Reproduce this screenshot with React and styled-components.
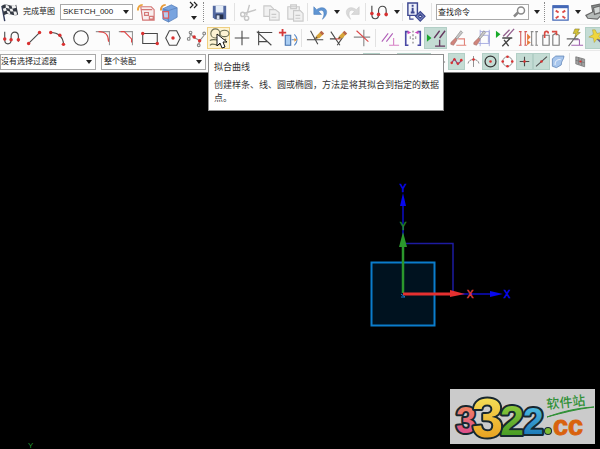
import React from 'react';
import styled, { createGlobalStyle, css } from 'styled-components';

const GlobalStyle = createGlobalStyle`
  * { box-sizing: border-box; }
  html, body, #root { height: 100%; }
  body {
    margin: 0;
    overflow: hidden;
    background: #000;
    color: #222;
    font: 8px/12px "Liberation Sans", "Noto Sans CJK SC", sans-serif;
  }
  button, select, input { font: inherit; color: inherit; }
`;

const Window = styled.div`
  height: 100%;
  min-height: 100vh;
  display: flex;
  flex-direction: column;
  overflow: hidden;
  position: relative;
`;

const Bar = styled.div`
  display: flex;
  align-items: center;
  flex: none;
  height: ${(p) => p.$height}px;
  background: #fcfcfc;
  border-bottom: 1px solid ${(p) => p.$edge || '#e9e9e9'};
  overflow: hidden;
  white-space: nowrap;
`;

const ToolButton = styled.button`
  flex: none;
  width: ${(p) => p.$width || 23}px;
  height: ${(p) => p.$height || 22}px;
  padding: 0;
  border: 1px solid transparent;
  background: transparent;
  display: flex;
  align-items: center;
  justify-content: center;
  ${(p) => p.$state === 'on' && css`
    background: #c4dcd4;
    border-color: #b2cfc6;
  `}
  ${(p) => p.$state === 'hover' && css`
    background: #fdf3d3;
    border-color: #efcf80;
  `}
`;

const FinishButton = styled.button`
  flex: none;
  display: flex;
  align-items: center;
  gap: 2px;
  width: 60px;
  height: 22px;
  padding: 0;
  border: 0;
  background: transparent;
`;

const Drawing = styled.svg`
  display: block;
  flex: none;
  overflow: visible;
  fill: none;
  stroke: #484848;
  stroke-width: 1.2;
`;

const Divider = styled.span`
  flex: none;
  width: 1px;
  height: 18px;
  margin: 0 ${(p) => p.$gap ?? 2}px;
  background: #e2e2e2;
`;

const Grip = styled.span`
  flex: none;
  width: 2px;
  height: 20px;
  margin: 0 ${(p) => p.$gap || 2}px;
  border-left: 1px dotted #8c8c8c;
`;

const Field = styled.label`
  flex: none;
  position: relative;
  width: ${(p) => p.$width}px;
  height: 16px;
  margin-right: ${(p) => p.$after || 0}px;
  display: flex;
`;

const Select = styled.select`
  appearance: none;
  width: 100%;
  height: 100%;
  margin: 0;
  padding: 0 12px 0 ${(p) => p.$inset ?? 2}px;
  border: 1px solid #a9a9a9;
  border-radius: 0;
  background: #fff;
`;

const SearchBox = styled.input`
  width: 100%;
  height: 100%;
  padding: 0 18px 0 1px;
  border: 1px solid #a9a9a9;
  border-radius: 0;
  background: #fff;
  &::placeholder { color: #222; opacity: 1; }
`;

const Adornment = styled.span`
  position: absolute;
  right: ${(p) => p.$right || 4}px;
  top: 50%;
  transform: translateY(-50%);
  pointer-events: none;
`;

const Overflow = styled.button`
  flex: none;
  width: 20px;
  height: 24px;
  padding: 2px 0 4px 6px;
  border: 0;
  background: transparent;
  display: flex;
  flex-direction: column;
  align-items: center;
  justify-content: space-between;
`;

const Tooltip = styled.div`
  position: absolute;
  z-index: 2;
  left: 208px;
  top: 54px;
  width: 236px;
  padding: 6px 2px 5px 5px;
  background: #fff;
  border: 1px solid #8d8d8d;
  color: #333;
  font-size: 9px;
  line-height: 13px;
`;

const TipTitle = styled.div`
  margin-bottom: 5px;
`;

const TipBody = styled.p`
  margin: 0;
`;

const Viewport = styled.main`
  flex: 1;
  position: relative;
  background: #000;
`;

const Triad = styled.svg`
  position: absolute;
  left: 360px;
  top: 105px;
  font: 10px "Liberation Sans", sans-serif;
`;

const CornerAxis = styled.span`
  position: absolute;
  left: 28px;
  bottom: -2px;
  color: #239a32;
  font-size: 8px;
  line-height: 10px;
`;

const Watermark = styled.svg`
  position: absolute;
  right: 5px;
  bottom: 5px;
  background: #cbcbcb;
  overflow: visible;
`;

const Pointer = styled.svg`
  position: absolute;
  z-index: 3;
  left: 216px;
  top: 33px;
  pointer-events: none;
`;

const Dots = ({ at, r = 1.9, fill = '#d93030' }) =>
  at.map(([x, y]) => <circle key={`${x}-${y}`} cx={x} cy={y} r={r} fill={fill} stroke="none" />);

const Pencil = () => (
  <g stroke="none">
    <path d="M10 12 12 8 16 4l3 3-4 4z" fill="#d9a63a" />
    <path d="m15 5 2-2 3 3-2 2z" fill="#b8664a" />
    <path d="m10 12 1-3 2 2z" fill="#5b4630" />
  </g>
);

const Screwdriver = () => (
  <g>
    <path d="m13 3 2 2-6 7-2-1z" fill="#c8c8c8" stroke="#858585" strokeWidth=".7" />
    <path d="m7 11 2 2-4 6-3-1v-2z" fill="#d0847b" stroke="#9a6561" strokeWidth=".6" />
  </g>
);

const icons = {
  flag: (
    <g stroke="none">
      <path d="M2 4 5 20" stroke="#343d5c" strokeWidth="1.5" />
      <path d="M2 4c5-4 8 2 15-1l2 10c-6 3-9-3-15 1z" fill="#343943" />
      <path d="m6 3 3 1 1 3-4-1zm6 1 4-1 1 3-4 1zM3 7l3-1 1 3-3 1zm7 0 3 0 1 3-3 0zm-3 2 3 1 1 3-3-1zm7 1 3 0 1 3-3 1z" fill="#f1f1f1" />
    </g>
  ),
  studio: <path d="M3 4v9c0 6 7 6 7 0V9c0-6 8-6 8 0v6" />,
  line: <path d="M4 17 16 5" />,
  arc: <path d="M3 5c8 0 14 5 14 13" />,
  circle: <circle cx="11" cy="11" r="8" />,
  fillet: (
    <g>
      <path d="M2 4h15v15" stroke="#969696" />
      <path d="M5 4c8 0 11 4 11 11" stroke="#e04444" />
    </g>
  ),
  chamfer: (
    <g>
      <path d="M2 4h15v15" stroke="#969696" />
      <path d="M4 4h4l8 8v4" stroke="#e04444" />
    </g>
  ),
  rect: <path d="M3 6h16v11H3z" />,
  polygon: <path d="M7 3h8l4 8-4 8H7l-4-8z" />,
  spline: (
    <g>
      <path d="m5 6-1 5m1-5q3 5 7 6l3 2 5-6" stroke="#888" />
      <path d="m15 14-1 4" stroke="#888" />
      <circle cx="5" cy="5" r="1.5" stroke="#888" />
      <circle cx="3" cy="12" r="1.5" stroke="#888" />
      <circle cx="20" cy="6" r="1.5" stroke="#888" />
      <circle cx="14" cy="19" r="1.5" stroke="#888" />
    </g>
  ),
  fit: (
    <g stroke="#6c6f55">
      <circle cx="7" cy="6" r="5" />
      <ellipse cx="17" cy="6" rx="5" ry="3.5" />
      <path d="M1 14c4-4 14 3 18-2M1 19c4-4 7 2 11-1" />
    </g>
  ),
  point: <path d="M11 3v16M3 11h16" />,
  corner: <path d="M4 3v16M4 5h15M2 4l16 15M4 15h10" />,
  pattern: (
    <g>
      <path d="M8 8h6v11H8z" fill="#a9cdf2" stroke="#4572ae" />
      <path d="M18 7c4 4 4 8 0 12M20 13h-5" stroke="#5d8dc9" />
      <path d="M5 1v8M1 5h8" stroke="#d43939" strokeWidth="2" />
      <path d="m18 11 3 2-3 2z" fill="#eb9739" stroke="none" />
    </g>
  ),
  trim: (
    <g>
      <path d="m5 3 8 15M1 13h18" />
      <Pencil />
    </g>
  ),
  trimRed: (
    <g>
      <path d="m2 4 10 15M16 9 9 19M1 12h6" />
      <path d="M7 12h6" stroke="#dc3f3f" />
      <Pencil />
    </g>
  ),
  extend: (
    <g>
      <path d="M2 10h18M13 2v18" stroke="#888" />
      <path d="m5 3 13 12" stroke="#dd4747" />
    </g>
  ),
  constraint: (
    <g stroke="#b05fb8">
      <path d="m2 15 7-9m-2 9 7-9" />
      <path d="M15 11v8m-5 0h11" stroke="#d680c5" />
    </g>
  ),
  symmetric: (
    <g>
      <path d="M6 4H3v15h3M16 4h3v15h-3" stroke="#4948a4" strokeWidth="1.8" />
      <path d="M11 3v16" stroke="#777" strokeDasharray="2 2" />
      <path d="M8 9v3m6-3v3" stroke="#999" />
      <path d="m5 3 4 2-4 2zm12 0-4 2 4 2z" fill="#c948be" stroke="none" />
    </g>
  ),
  display: (
    <g stroke="#65395f">
      <path d="m9 11 6-8m0 8 6-8" strokeWidth="1.5" />
      <path d="M15 13v7m-5 0h11" strokeWidth="1.5" />
      <path d="m1 7 5 4-5 4z" fill="#19a52c" stroke="none" />
    </g>
  ),
  screwCorner: (
    <g>
      <path d="M10 12h7v7M8 19h11" stroke="#e1847a" />
      <Screwdriver />
    </g>
  ),
  screwBox: (
    <g>
      <path d="M9 4h10v13H7m2-9h9v8M9 2v18m10-18v18" stroke="#9aa0dd" strokeWidth=".9" />
      <Screwdriver />
    </g>
  ),
  convert: (
    <g stroke="#94618f">
      <path d="m9 9 7-7m-3 8 8-9" strokeWidth="1.5" />
      <path d="M8 11h11M8 20l9-9m-7 2 5 7" stroke="#444" strokeWidth="1.5" />
      <path d="m1 3 5 4-5 4z" fill="#17aa29" stroke="none" />
    </g>
  ),
  mirror: (
    <g>
      <path d="M3 4v15m5-15v15M1 4h3m3 0h3M1 19h3m3 0h3" stroke="#d45c5b" />
      <path d="M15 4v15m5-15v15m-6-15h3m2 0h3m-8 15h3m2 0h3" stroke="#888" />
      <path d="m10 6 4 4-4 4zm0 7 4 3-4 3z" fill="#e77c3d" stroke="none" />
    </g>
  ),
  locks: (
    <g>
      <path d="M2 8h7v11H2zm11 0 3-2 4 2v11h-7z" stroke="#777" />
      <path d="M4 11V6c0-3 4-3 4 0M12 4h5v4" stroke="#d94a42" strokeWidth="1.8" />
    </g>
  ),
  flash: (
    <g>
      <path d="M11 13h6v6m-9 0h13" stroke="#a164b0" />
      <path d="m5 20 9-12M3 12h13" stroke="#666" />
      <path d="m12 1 5 0-2 4h3l-6 5 1-4h-3z" fill="#d5c337" stroke="#716923" strokeWidth=".5" />
    </g>
  ),
  magic: (
    <g>
      <path d="m10 10 12 12" stroke="#615b92" strokeWidth="2.5" />
      <path d="m9 2 2 4 5-1-3 4 3 4-5-1-3 4-1-5-5-1 5-3-1-5z" fill="#efd63c" stroke="#9d903c" strokeWidth=".5" />
    </g>
  ),
  sketchBox: (
    <g>
      <path d="M5 5h11l3 3v11H7zm0 3h12m-8 3h4v3H9zm5 4h4v3h-4z" stroke="#d47776" fill="#f8eeee" />
      <path d="M2 9c0-5 2-6 5-6" stroke="#eba33e" strokeWidth="2" />
    </g>
  ),
  cube: (
    <g stroke="#587fba" strokeWidth=".8">
      <path d="m4 7 9-4 6 3v10l-9 5-6-3z" fill="#79a4df" />
      <path d="m4 7 6 2v12m0-12 9-3" fill="#5f8dd0" />
      <path d="M4 10h6v7H5z" stroke="#d85c62" strokeWidth="1.3" fill="#b6ccef" />
      <path d="M2 9c0-5 2-6 5-6" fill="none" stroke="#e99a38" strokeWidth="2" />
    </g>
  ),
  save: (
    <g stroke="none">
      <path d="M4 4h14v14H6l-2-2z" fill="#5268a0" />
      <path d="M7 4h8v7H7z" fill="#e4ecf7" />
      <path d="M7 13h8v5H7z" fill="#252f4a" />
      <path d="M8 14h3v4H8z" fill="#d4dced" />
    </g>
  ),
  cut: (
    <g stroke="#c6c6c6" strokeWidth="1.5">
      <path d="m12 3-3 11m10-6L6 12" />
      <circle cx="5" cy="13" r="2.2" />
      <circle cx="9" cy="17" r="2.2" />
    </g>
  ),
  copy: (
    <g stroke="#cacaca" fill="#f1f1f1">
      <path d="M3 4h7l3 3v8H3z" />
      <path d="M9 8h6l4 3v8H9zm2 5h5m-5 3h5" />
    </g>
  ),
  paste: (
    <g stroke="#cacaca" fill="#f1f1f1">
      <path d="M4 5h12v13H4zM7 3h6v4H7z" />
      <path d="M10 9h7l3 3v8H10zm2 5h5m-5 3h5" />
    </g>
  ),
  undo: <path d="M4 5v8h8l-3-3c4-4 8 1 4 8 9-7 3-16-6-10z" fill="#5f95d3" stroke="#4a7bb9" strokeWidth=".6" />,
  redo: <path d="M18 5v8h-8l3-3c-4-4-8 1-4 8-9-7-3-16 6-10z" fill="#dadada" stroke="#c8c8c8" strokeWidth=".6" />,
  info: (
    <g stroke="#3d4790">
      <path d="M3 1h10v13H3z" fill="#edf0fb" strokeWidth="1.5" />
      <path d="M8 3v2m0 1v5m-2 0h4" strokeWidth="2" />
      <path d="m11 15 5-5 5 5-5 5z" fill="#7a88bb" />
      <path d="m14 15 2-2 2 2-2 2z" fill="#eef1fb" />
      <path d="M5 14v4h4" />
    </g>
  ),
  window: (
    <g>
      <path d="M3 4h16v15H3z" fill="#fff" stroke="#4468b6" strokeWidth="1.3" />
      <path d="M3 5h16" stroke="#4468b6" strokeWidth="3" />
      <path d="m6 9 3 2m7-2-3 2m-7 6 3-2m7 2-3-2" stroke="#df4c48" strokeWidth="2" />
    </g>
  ),
  laptop: (
    <g stroke="#696969">
      <path d="m8 4 10-2 1 10-9 3z" fill="#8c9291" />
      <path d="m2 14 8-4 10 2-6 6-10-1z" fill="#b5bab8" />
      <path d="m10 6 7-2v7l-6 2z" fill="#d4d8d7" />
    </g>
  ),
  snapPoly: <path d="m4 13 4-6 5 8 6-6" stroke="#874078" strokeWidth="1.7" />,
  snapCross: <path d="M11 3v16M3 14c1-8 15-8 16 0" stroke="#777" />,
  snapCenter: <circle cx="11" cy="11" r="8" stroke="#333" strokeWidth="1.8" />,
  snapQuad: <circle cx="11" cy="11" r="7" stroke="#777" />,
  snapPoint: <path d="M11 4v14M4 11h14" strokeWidth="1.6" />,
  snapLine: <path d="M3 18 19 4" strokeWidth="1.5" />,
  face: (
    <g stroke="#6488b9">
      <path d="m2 7 5-4h12c0 6-4 6-4 13l-7 4-6-2z" fill="#a7c5ec" />
      <path d="M6 16c0-6 3-8 8-8" stroke="#fff" />
    </g>
  ),
  sheet: (
    <g stroke="#707070">
      <path d="m3 3 15 4v13L3 15z" fill="#a1a1a1" />
      <path d="m8 4v12m5-10v12M3 9l15 4" />
    </g>
  ),
};

const marks = {
  studio: [[3, 12], [10, 13], [18, 13]],
  line: [[4, 17], [16, 5]],
  arc: [[3, 5], [13, 8], [17, 18]],
  rect: [[3, 6], [19, 17]],
  polygon: [[11, 11]],
  spline: [[9, 10], [15, 14]],
  snapPoly: [[4, 13], [8, 8], [13, 14], [18, 9]],
  snapCross: [[11, 8]],
  snapCenter: [[11, 11]],
  snapQuad: [[11, 4], [4, 11], [18, 11], [11, 18]],
  snapPoint: [[11, 11]],
  snapLine: [[11, 11]],
  sheet: [[11, 11]],
};

const Icon = ({ name, size = 21 }) => (
  <Drawing width={size} height={size} viewBox="0 0 22 22" aria-hidden="true">
    {icons[name]}
    {marks[name] && <Dots at={marks[name]} />}
  </Drawing>
);

const Tool = ({ name, label, state, width, height, size }) => (
  <ToolButton type="button" aria-label={label || name} $state={state} $width={width} $height={height}>
    <Icon name={name} size={size} />
  </ToolButton>
);

const Caret = () => (
  <Drawing width="6" height="4" viewBox="0 0 6 4" aria-hidden="true">
    <path d="M0 0h6L3 4z" fill="#222" stroke="none" />
  </Drawing>
);

const Menu = ({ label, width = 9 }) => (
  <ToolButton type="button" aria-label={label} $width={width}>
    <Caret />
  </ToolButton>
);

const Dropdown = ({ label, value, width, after, inset }) => (
  <Field $width={width} $after={after}>
    <Select aria-label={label} defaultValue={value} $inset={inset}>
      <option>{value}</option>
    </Select>
    <Adornment><Caret /></Adornment>
  </Field>
);

const curveTools = [
  ['studio', '艺术样条'], ['line', '直线'], ['arc', '圆弧'], ['circle', '圆'],
  ['fillet', '圆角'], ['chamfer', '倒斜角'], ['rect', '矩形'], ['polygon', '多边形'],
  ['spline', '样条'], ['fit', '拟合曲线', 'hover'], ['point', '点'], ['corner', '偏置曲线'], ['pattern', '阵列曲线'],
];
const editTools = [['trim', '快速修剪'], ['trimRed', '快速延伸'], ['extend', '制作拐角']];
const constraintTools = [
  ['constraint', '几何约束'], ['symmetric', '设为对称'], ['display', '显示约束', 'on'],
  ['screwCorner', '自动约束'], ['screwBox', '自动尺寸'], ['convert', '转换'],
  ['mirror', '备选解'], ['locks', '锁定'], ['flash', '推断约束'], ['magic', '连续自动标注', 'on'],
];
const snapTools = [
  ['snapPoly', '端点', 'on'], ['snapCross', '交点'], ['snapCenter', '圆心', 'on'],
  ['snapQuad', '象限点'], ['snapPoint', '现有点', 'on'], ['snapLine', '曲线上的点', 'on'], ['face', '面上的点'],
];
const coveredSnaps = [
  ['rect'], ['cube'], ['polygon'], ['circle'], ['sheet'], ['face'], ['spline'], ['snapCross'],
  ['snapLine'], ['snapPoint', null, 'on'], ['circle'], ['line', null, 'on'], ['arc', null, 'on'], ['point'],
];

const renderTools = (list, props) =>
  list.map(([name, label, state], i) => (
    <Tool key={`${name}-${i}`} name={name} label={label} state={state} {...props} />
  ));

const StandardBar = () => (
  <Bar $height={25}>
    <FinishButton type="button"><Icon name="flag" />完成草图</FinishButton>
    <Dropdown label="草图名" value="SKETCH_000" width={73} after={2} />
    <Tool name="sketchBox" label="定向到草图" />
    <Tool name="cube" label="重新附着" />
    <Overflow type="button" aria-label="更多">
      <Drawing width="8" height="6" viewBox="0 0 8 6">
        <path d="m0 0 3 3-3 3M4 0l3 3-3 3" stroke="#222" />
      </Drawing>
      <Caret />
    </Overflow>
    <Grip $gap={2} />
    <Tool name="save" label="保存" width={25} />
    <Divider />
    <Tool name="cut" label="剪切" />
    <Tool name="copy" label="复制" />
    <Tool name="paste" label="粘贴" />
    <Divider $gap={1} />
    <Tool name="undo" label="撤销" />
    <Menu label="撤销列表" />
    <Tool name="redo" label="重做" />
    <Divider $gap={1} />
    <Tool name="studio" label="重复命令" width={25} />
    <Menu label="命令列表" />
    <Divider $gap={1} />
    <Tool name="info" label="命令查找器" />
    <Divider $gap={4} />
    <Field $width={93} $after={3}>
      <SearchBox aria-label="查找命令" placeholder="查找命令" />
      <Adornment $right={3}>
        <Drawing width="13" height="13" viewBox="0 0 13 13">
          <circle cx="8" cy="5" r="3.5" stroke="#8a8a8a" strokeWidth="1.5" />
          <path d="m5 7-4 4" stroke="#888" strokeWidth="2.5" />
        </Drawing>
      </Adornment>
    </Field>
    <Menu label="查找选项" width={9} />
    <Grip $gap={3} />
    <Tool name="window" label="窗口" />
    <Menu label="窗口列表" width={12} />
    <Tool name="laptop" label="显示" width={20} />
  </Bar>
);

const SketchBar = () => (
  <Bar $height={26}>
    {renderTools(curveTools, { size: 20 })}
    <Divider />
    {renderTools(editTools, { size: 20 })}
    <Divider />
    {renderTools(constraintTools, { size: 20 })}
  </Bar>
);

const SelectionBar = () => (
  <Bar $height={22} $edge="#777">
    <Dropdown label="类型过滤器" value="没有选择过滤器" width={96} after={5} inset={0} />
    <Dropdown label="选择范围" value="整个装配" width={105} after={4} />
    {renderTools(coveredSnaps, { width: 17, height: 17, size: 14 })}
    {renderTools(snapTools, { width: 17, height: 17, size: 15 })}
    <Divider $gap={2} />
    <Tool name="sheet" label="片体" width={17} height={17} size={13} />
  </Bar>
);

const Axes = () => (
  <Triad width="160" height="160" viewBox="360 178 160 160" role="img" aria-label="坐标系">
    <rect x="371.5" y="262.5" width="63" height="63" fill="#00121f" stroke="#0b7dcc" strokeWidth="2" />
    <path d="M403 243.5h50v50" fill="none" stroke="#1d1ba0" strokeWidth="1.5" />
    <path d="M403 236v-35M455 294h39" stroke="#0c0cc4" strokeWidth="1.5" />
    <path d="m403 193 3 13h-6zM503 294l-13-3v6z" fill="#0808ee" />
    <path d="M403 293v-53" stroke="#2b972c" strokeWidth="2.5" />
    <path d="m403 232 4 15h-8z" fill="#2b972c" />
    <path d="M403 294h50" stroke="#e53030" strokeWidth="3" />
    <path d="m465 294-15-4v7z" fill="#e53030" />
    <path d="M401 297h4l-4-3" fill="none" stroke="#1878c8" />
    <g textAnchor="middle" strokeWidth=".5">
      <text x="403" y="192" fill="#0808ee" stroke="#0808ee">Y</text>
      <text x="403" y="230" fill="#238329" stroke="#238329">Y</text>
      <text x="470" y="298" fill="#d63c3c" stroke="#d63c3c">X</text>
      <text x="507" y="298" fill="#0808ee" stroke="#0808ee">X</text>
    </g>
  </Triad>
);

const digits = [
  { text: '3', x: 6, y: 44, size: 36, fill: 'url(#rose)' },
  { text: '2', x: 73, y: 45, size: 37, fill: 'url(#azure)' },
  { text: '2', x: 50, y: 46, size: 43, fill: 'url(#lime)' },
  { text: '3', x: 22, y: 48, size: 56, fill: 'url(#gold)' },
];

const Gradient = ({ id, from, to }) => (
  <linearGradient id={id} x1="0" y1="0" x2="0" y2="1">
    <stop offset=".2" stopColor={from} />
    <stop offset=".9" stopColor={to} />
  </linearGradient>
);

const SiteMark = () => (
  <Watermark width="145" height="55" viewBox="0 0 145 55" role="img" aria-label="3322.cc 软件站">
    <defs>
      <Gradient id="rose" from="#ef8062" to="#d94791" />
      <Gradient id="gold" from="#f4dc55" to="#e69b1b" />
      <Gradient id="lime" from="#8bc83c" to="#3f9622" />
      <Gradient id="azure" from="#4ab5dd" to="#1672b4" />
    </defs>
    <g fontFamily='"Liberation Sans", sans-serif' fontWeight="700" stroke="#17272f" strokeWidth="4" strokeLinejoin="round" paintOrder="stroke">
      {digits.map((d) => (
        <text key={d.x} x={d.x} y={d.y} fontSize={d.size} fill={d.fill}>{d.text}</text>
      ))}
      <circle cx="98" cy="42" r="3" fill="#7dbb34" strokeWidth="2" />
    </g>
    <text x="103" y="46" fill="#d9620d" stroke="#d9620d" fontFamily='"Liberation Sans", sans-serif' fontWeight="700" fontSize="27">cc</text>
    <text x="97" y="20" transform="rotate(-6 97 20)" fill="#2f9035" fontFamily='"Noto Sans CJK SC", sans-serif' fontWeight="500" fontSize="13">软件站</text>
    <path d="M97 28c14-5 29-9 47-10-17 2-32 6-47 10z" fill="#2f9035" stroke="#2f9035" />
  </Watermark>
);

export default function App() {
  return (
    <Window>
      <GlobalStyle />
      <StandardBar />
      <SketchBar />
      <SelectionBar />
      <Viewport>
        <Axes />
        <CornerAxis>Y</CornerAxis>
        <SiteMark />
      </Viewport>
      <Tooltip role="tooltip">
        <TipTitle>拟合曲线</TipTitle>
        <TipBody>创建样条、线、圆或椭圆，方法是将其拟合到指定的数据点。</TipBody>
      </Tooltip>
      <Pointer width="12" height="17" viewBox="0 0 12 17" aria-hidden="true">
        <path d="M1 1v12l3-3 2 5 3-1-2-5h4z" fill="#fff" stroke="#111" />
      </Pointer>
    </Window>
  );
}
